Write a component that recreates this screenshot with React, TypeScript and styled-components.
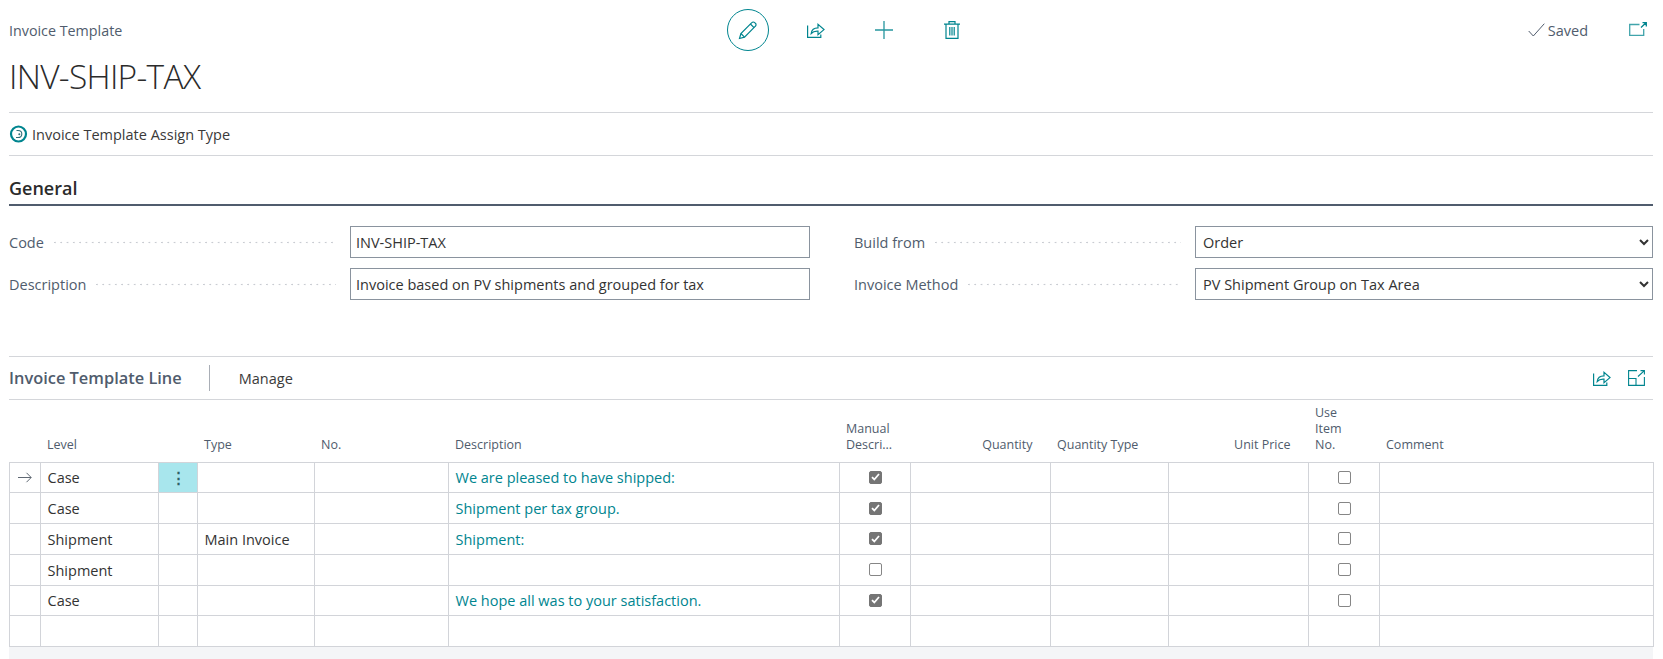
import React from "react";
import styled, { createGlobalStyle } from "styled-components";

const TEAL = "#00858f";
const SLATE = "#505c6d";
const LINE = "#d4d6da";
const GRID = "#d2d4d9";

const GlobalStyle = createGlobalStyle`
  html, body {
    margin: 0;
    padding: 0;
    background: #fff;
    overflow: hidden;
  }
  body {
    font-family: "Open Sans", "Liberation Sans", sans-serif;
    font-size: 14.5px;
    color: #2b2b2b;
  }
`;

const columns = [31, 118, 39, 117, 134, 391, 71, 140, 118, 140, 71, 274];

const lines = [
  { level: "Case", type: "", text: "We are pleased to have shipped:", manual: true, current: true },
  { level: "Case", type: "", text: "Shipment per tax group.", manual: true },
  { level: "Shipment", type: "Main Invoice", text: "Shipment:", manual: true },
  { level: "Shipment", type: "", text: "", manual: false },
  { level: "Case", type: "", text: "We hope all was to your satisfaction.", manual: true }
];

const PencilIcon = () => (
  <svg width="20" height="20" viewBox="0 0 20 20" fill="none" stroke={TEAL} strokeWidth="1.2">
    <path d="M1.5 18.5l1.4-5L13.8 2.6a2 2 0 0 1 2.9 0l.7.7a2 2 0 0 1 0 2.9L6.5 17.1z" />
    <path d="M2.9 13.5l3.6 3.6M12.4 4l3.6 3.6" />
  </svg>
);

const ShareIcon = () => (
  <svg width="18" height="16" viewBox="0 0 18 16" fill="none" stroke={TEAL} strokeWidth="1.2">
    <path d="M.6 3.5v11.9h13.2v-3" />
    <path d="M4.2 11.5c.4-3.6 3-5.6 6.8-5.6V2.4L17 7.600l-6 5v-3.500c-2.800-.2-5 .3-6.800 2.400z" />
  </svg>
);

const PlusIcon = () => (
  <svg width="18" height="18" viewBox="0 0 18 18" stroke={TEAL} strokeWidth="1.3" opacity="0.85">
    <path d="M9 0v18M0 9h18" />
  </svg>
);

const TrashIcon = () => (
  <svg width="16" height="18" viewBox="0 0 16 18" fill="none" stroke={TEAL} strokeWidth="1.2">
    <path d="M0 3.100h16M5 3.100V.7h6v2.400" />
    <path d="M2 3.100v14.200h12V3.100" />
    <path d="M5.800 6v8.500M8 6v8.500M10.200 6v8.500" />
  </svg>
);

const CheckIcon = () => (
  <svg width="17" height="14" viewBox="0 0 17 14" fill="none" stroke={SLATE} strokeWidth="1">
    <path d="M.7 8l4.600 5L16.300.7" />
  </svg>
);

const OpenIcon = () => (
  <svg width="18" height="14" viewBox="0 0 18 14" fill="none" stroke={TEAL} strokeWidth="1.3">
    <path d="M10.500 2.500H.7v10.800h14V7" opacity="0.75" />
    <path d="M12 5.500L17 .8M13.500.7h3.800v3.800" />
  </svg>
);

const ExpandIcon = () => (
  <svg width="17" height="16" viewBox="0 0 17 16" fill="none" stroke={TEAL} strokeWidth="1.1">
    <path d="M9 .6H.6v14.800h15.800V7" />
    <path d="M.6 8.500h7.400v6.900" />
    <path d="M10 6.500L16.400.6M12.500.6h3.900v3.900" />
  </svg>
);

const AssignIcon = () => (
  <svg width="20" height="20" viewBox="0 0 20 20" fill="none">
    <circle cx="9.500" cy="10" r="7.500" stroke={TEAL} strokeWidth="2.200" />
    <path d="M7.500 6.500h1.500c2.400 0 3.800 1.400 3.800 3.400s-1.400 3.600-3.800 3.600H7" stroke="#2f6f78" strokeWidth="1.100" />
    <circle cx="10.300" cy="10.300" r="1" fill="#2f6f78" />
  </svg>
);

const ArrowIcon = () => (
  <svg width="14" height="11" viewBox="0 0 14 11" fill="none" stroke="#5f6873" strokeWidth="1">
    <path d="M0 5.500h13M8.500.8l4.700 4.700-4.700 4.700" />
  </svg>
);

const Page = styled.div`
  width: 1663px;
  height: 659px;
  padding: 0 10px 0 9px;
  box-sizing: border-box;
  overflow: hidden;
`;

const Header = styled.header`
  display: grid;
  grid-template-columns: 718px auto 1fr;
  height: 113px;
  box-sizing: border-box;
  border-bottom: 1px solid ${LINE};
`;

const TitleBlock = styled.div`
  display: flex;
  flex-direction: column;
`;

const Caption = styled.div`
  margin-top: 21px;
  font-size: 14.300px;
  line-height: 20px;
  color: ${SLATE};
`;

const Title = styled.h1`
  margin: 12px 0 0;
  font-size: 33.500px;
  line-height: 46px;
  letter-spacing: -0.700px;
  font-weight: 300;
  color: #2b2b2b;
`;

const Actions = styled.div`
  display: flex;
  align-items: center;
  height: 42px;
  margin-top: 9px;
`;

const RoundButton = styled.button`
  width: 42px;
  height: 42px;
  padding: 0;
  display: flex;
  align-items: center;
  justify-content: center;
  background: #fff;
  border: 1.2px solid ${TEAL};
  border-radius: 50%;
`;

const IconButton = styled.button<{ $left: number }>`
  display: flex;
  padding: 0;
  margin-left: ${(p) => p.$left}px;
  background: none;
  border: none;
`;

const Status = styled.div`
  display: flex;
  justify-content: flex-end;
  align-items: flex-start;
  padding-top: 22px;
`;

const Saved = styled.div`
  display: flex;
  align-items: center;
  gap: 3px;
  height: 16px;
  color: ${SLATE};
`;

const OpenButton = styled(IconButton)`
  margin-right: 6px;
`;

const ActionBar = styled.div`
  display: flex;
  align-items: center;
  gap: 3px;
  height: 43px;
  box-sizing: border-box;
  border-bottom: 1px solid ${LINE};
  color: #3a3a3a;
`;

const SectionTitle = styled.h2`
  margin: 0;
  height: 50px;
  box-sizing: border-box;
  padding-top: 20px;
  font-size: 18px;
  line-height: 24px;
  font-weight: 600;
  color: #2b2b2b;
  border-bottom: 2px solid ${SLATE};
`;

const FieldGrid = styled.div`
  display: grid;
  grid-template-columns: 801px 1fr;
  column-gap: 44px;
  row-gap: 10px;
  margin-top: 20px;
`;

const Field = styled.label`
  display: grid;
  grid-template-columns: 341px 1fr;
  align-items: center;
`;

const Label = styled.span`
  display: flex;
  align-items: center;
  gap: 10px;
  padding-right: 14px;
  color: ${SLATE};
`;

const Dots = styled.span`
  flex: 1;
  height: 3px;
  background-image: radial-gradient(circle at 1px 1.500px, #c9ccd2 0.8px, transparent 1.100px);
  background-size: 6.300px 3px;
`;

const TextInput = styled.input`
  height: 32px;
  box-sizing: border-box;
  width: 100%;
  padding: 0 5px;
  border: 1px solid #8a939e;
  border-radius: 0;
  outline: none;
  font: inherit;
  color: #333;
`;

const SelectInput = styled.select`
  height: 32px;
  box-sizing: border-box;
  width: 100%;
  padding: 0 3px;
  border: 1px solid #8a939e;
  border-radius: 0;
  background: #fff;
  outline: none;
  font: inherit;
  color: #333;
`;

const PartHeader = styled.div`
  display: flex;
  align-items: center;
  height: 44px;
  margin-top: 56px;
  box-sizing: border-box;
  border-top: 1px solid ${LINE};
  border-bottom: 1px solid ${LINE};
`;

const PartTitle = styled.div`
  font-size: 16.400px;
  font-weight: 600;
  color: ${SLATE};
  padding-right: 27px;
  border-right: 1px solid #a9aeb6;
  line-height: 26px;
`;

const PartMenu = styled.div`
  margin-left: 29px;
  flex: 1;
  color: #3a3a3a;
`;

const PartIcons = styled.div`
  display: flex;
  gap: 17px;
  padding-right: 8px;
`;

const Table = styled.table`
  width: 1644px;
  table-layout: fixed;
  border-collapse: collapse;
`;

const HeadRow = styled.tr`
  height: 62px;
`;

const HeadCell = styled.th<{ $right?: boolean }>`
  padding: 0 ${(p) => (p.$right ? "18px" : "6px")} 9px 6.500px;
  vertical-align: bottom;
  text-align: ${(p) => (p.$right ? "right" : "left")};
  font-size: 12.500px;
  line-height: 16px;
  font-weight: 400;
  color: ${SLATE};
`;

const Row = styled.tr`
  height: 30.750px;
`;

const Cell = styled.td<{ $active?: boolean; $center?: boolean }>`
  padding: 1px 6px 0 6.500px;
  border: 1px solid ${GRID};
  background: ${(p) => (p.$active ? "#a8e6ed" : "#fff")};
  text-align: ${(p) => (p.$center ? "center" : "left")};
  color: #333;
  white-space: nowrap;
  overflow: hidden;
`;

const MarkCell = styled(Cell)`
  padding: 0 6px;
`;

const LinkCell = styled(Cell)`
  color: ${TEAL};
`;

const Kebab = styled.span`
  display: inline-block;
  font-size: 15px;
  line-height: 1;
  font-weight: 700;
  color: #2f5f66;
`;

const Box = styled.span<{ $on: boolean }>`
  display: flex;
  align-items: center;
  justify-content: center;
  margin: 0 auto;
  width: 13px;
  height: 13px;
  box-sizing: border-box;
  border-radius: 2px;
  border: 1px solid ${(p) => (p.$on ? "#757575" : "#868686")};
  background: ${(p) => (p.$on ? "#757575" : "#fff")};
`;

const Footer = styled.div`
  height: 20px;
  background: #f4f5f7;
`;

const Check = ({ on }: { on: boolean }) => (
  <Box $on={on}>
    {on && (
      <svg width="9" height="8" viewBox="0 0 9 8" fill="none" stroke="#fff" strokeWidth="1.800">
        <path d="M1 4.200l2.300 2.300L8 1" />
      </svg>
    )}
  </Box>
);

const App = () => {
  return (
    <Page>
      <GlobalStyle />
      <Header>
        <TitleBlock>
          <Caption>Invoice Template</Caption>
          <Title>INV-SHIP-TAX</Title>
        </TitleBlock>
        <Actions>
          <RoundButton>
            <PencilIcon />
          </RoundButton>
          <IconButton $left={38}>
            <ShareIcon />
          </IconButton>
          <IconButton $left={50}>
            <PlusIcon />
          </IconButton>
          <IconButton $left={51}>
            <TrashIcon />
          </IconButton>
        </Actions>
        <Status>
          <Saved>
            <CheckIcon />
            Saved
          </Saved>
          <OpenButton $left={41}>
            <OpenIcon />
          </OpenButton>
        </Status>
      </Header>

      <ActionBar>
        <AssignIcon />
        Invoice Template Assign Type
      </ActionBar>

      <SectionTitle>General</SectionTitle>
      <FieldGrid>
        <Field>
          <Label>
            Code
            <Dots />
          </Label>
          <TextInput readOnly value="INV-SHIP-TAX" />
        </Field>
        <Field>
          <Label>
            Build from
            <Dots />
          </Label>
          <SelectInput defaultValue="Order">
            <option>Order</option>
          </SelectInput>
        </Field>
        <Field>
          <Label>
            Description
            <Dots />
          </Label>
          <TextInput readOnly value="Invoice based on PV shipments and grouped for tax" />
        </Field>
        <Field>
          <Label>
            Invoice Method
            <Dots />
          </Label>
          <SelectInput defaultValue="PV Shipment Group on Tax Area">
            <option>PV Shipment Group on Tax Area</option>
          </SelectInput>
        </Field>
      </FieldGrid>

      <PartHeader>
        <PartTitle>Invoice Template Line</PartTitle>
        <PartMenu>Manage</PartMenu>
        <PartIcons>
          <ShareIcon />
          <ExpandIcon />
        </PartIcons>
      </PartHeader>

      <Table>
        <colgroup>
          {columns.map((w, i) => (
            <col key={i} style={{ width: w }} />
          ))}
        </colgroup>
        <thead>
          <HeadRow>
            <HeadCell />
            <HeadCell>Level</HeadCell>
            <HeadCell />
            <HeadCell>Type</HeadCell>
            <HeadCell>No.</HeadCell>
            <HeadCell>Description</HeadCell>
            <HeadCell>
              Manual
              <br />
              Descri...
            </HeadCell>
            <HeadCell $right>Quantity</HeadCell>
            <HeadCell>Quantity Type</HeadCell>
            <HeadCell $right>Unit Price</HeadCell>
            <HeadCell>
              Use
              <br />
              Item
              <br />
              No.
            </HeadCell>
            <HeadCell>Comment</HeadCell>
          </HeadRow>
        </thead>
        <tbody>
          {lines.map((l, id) => (
            <Row key={id}>
              <MarkCell $center>{l.current && <ArrowIcon />}</MarkCell>
              <Cell>{l.level}</Cell>
              <MarkCell $active={l.current} $center>
                {l.current && <Kebab>⋮</Kebab>}
              </MarkCell>
              <Cell>{l.type}</Cell>
              <Cell />
              <LinkCell>{l.text}</LinkCell>
              <MarkCell $center>
                <Check on={l.manual} />
              </MarkCell>
              <Cell />
              <Cell />
              <Cell />
              <MarkCell $center>
                <Check on={false} />
              </MarkCell>
              <Cell />
            </Row>
          ))}
          <Row>
            {columns.map((_, i) => (
              <Cell key={i} />
            ))}
          </Row>
        </tbody>
      </Table>
      <Footer />
    </Page>
  );
};

export default App;
